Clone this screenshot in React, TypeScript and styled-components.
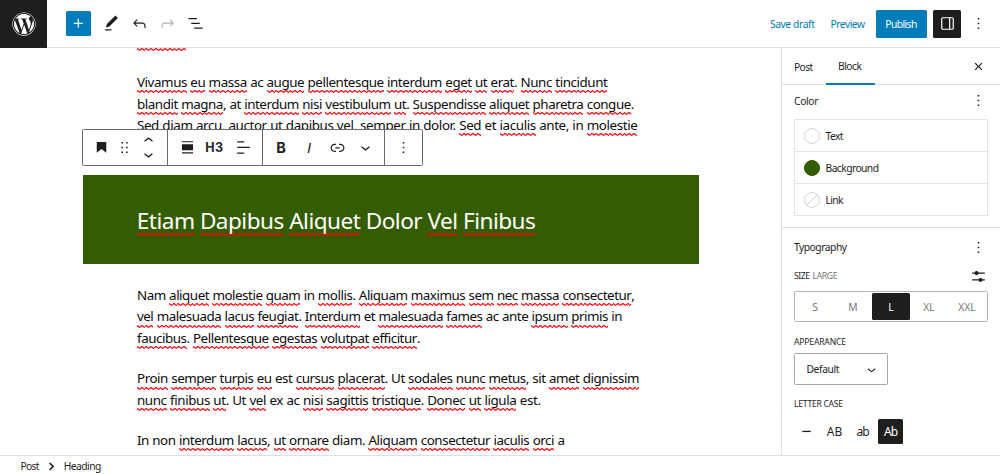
import React, { useLayoutEffect, useRef, useState } from "react";
import styled, { createGlobalStyle, css } from "styled-components";
import { FaWordpress } from "react-icons/fa";

const ink = "#1e1e1e";
const blue = "#007cba";
const line = "#e0e0e0";
const green = "#345c00";

const GlobalStyle = createGlobalStyle`
  *, *::before, *::after { box-sizing: border-box; }
  body {
    margin: 0;
    background: #fff;
    color: ${ink};
    font-family: "Noto Sans", "Open Sans", sans-serif;
    font-size: 10.3px;
    overflow: hidden;
  }
  button { font: inherit; color: inherit; background: none; border: 0; padding: 0; margin: 0; }
  h2, h3, p { margin: 0; font-weight: 400; }
`;

/* Text tracked so that it takes exactly the given width. */
const Tracked = styled.span`
  display: inline-block;
  white-space: nowrap;
`;

function Fit({ width, children }: { width: number; children: React.ReactNode }) {
  const ref = useRef<HTMLSpanElement>(null);
  const [spacing, setSpacing] = useState(0);
  useLayoutEffect(() => {
    const el = ref.current;
    if (!el) return;
    el.style.letterSpacing = "0px";
    const natural = el.getBoundingClientRect().width;
    const count = (el.textContent || "").length;
    const next = (width - natural) / Math.max(1, count - 1);
    el.style.letterSpacing = `${next}px`;
    setSpacing(next);
  }, [width]);
  return (
    <Tracked ref={ref} style={{ letterSpacing: `${spacing}px` }}>
      {children}
    </Tracked>
  );
}

const paths = {
  plus: "M11 12.5V17.5H12.5V12.5H17.5V11H12.5V6H11V11H6V12.5H11Z",
  pencil: "M20.1 5.1L16.9 2 6.2 12.7l-1.3 4.4 4.5-1.3L20.1 5.1zM4 20.8h8v-1.5H4v1.5z",
  undo: "M18.3 11.7c-.6-.6-1.4-.9-2.3-.9H6.7l2.9-3.3-1.1-1-4.5 5L8.5 16l1-1-2.7-2.7H16c.5 0 .9.2 1.3.5 1 1 1 3.4 1 4.5v.3h1.5v-.2c0-1.5 0-4.3-1.5-5.7z",
  redo: "M15.6 6.5l-1.1 1 2.9 3.3H8c-.9 0-1.7.3-2.3.9-1.4 1.5-1.4 4.2-1.4 5.6v.2h1.5v-.3c0-1.1 0-3.5 1-4.5.3-.3.7-.5 1.3-.5h9.2L14.5 15l1.1 1.1 4.6-4.6-4.6-5z",
  listView: "M13.8 5.2H3v1.5h10.8V5.2zm-3.6 12v1.5H21v-1.5H10.2zm7.2-6H6.6v1.5h10.8v-1.5z",
  more: "M13 19h-2v-2h2v2zm0-6h-2v-2h2v2zm0-6h-2V5h2v2z",
  drawer: "M18 4H6c-1.1 0-2 .9-2 2v12c0 1.1.9 2 2 2h12c1.1 0 2-.9 2-2V6c0-1.1-.9-2-2-2zm-4 14.5H6c-.3 0-.5-.2-.5-.5V6c0-.3.2-.5.5-.5h8v13zm4.5-.5c0 .3-.2.5-.5.5h-2.5v-13H18c.3 0 .5.2.5.5v12z",
  close: "M12 13.06l3.712 3.713 1.061-1.06L13.061 12l3.712-3.712-1.06-1.06L12 10.938 8.288 7.227l-1.061 1.06L10.939 12l-3.712 3.712 1.06 1.061L12 13.061z",
  bookmark: "M6 5V18.6L12 13.85L18 18.6V5H6Z",
  drag: "M8 7h2V5H8v2zm0 6h2v-2H8v2zm0 6h2v-2H8v2zm6-14v2h2V5h-2zm0 8h2v-2h-2v2zm0 6h2v-2h-2v2z",
  up: "M6.5 12.4L12 8l5.5 4.4-.9 1.2L12 10l-4.5 3.6-1-1.2z",
  down: "M17.5 11.6L12 16l-5.5-4.4.9-1.2L12 14l4.5-3.6 1 1.2z",
  fullWidth: "M5 4h14v1.5H5zM5 8h14v7.5H5zM5 18h14v1.5H5z",
  alignLeft: "M4 19.8h8.9v-1.5H4v1.5zm8.9-15.6H4v1.5h8.9V4.2zm-8.9 7v1.5h16v-1.5H4z",
  link: "M15.6 7.2H14v1.5h1.6c2 0 3.7 1.7 3.7 3.7s-1.7 3.7-3.7 3.7H14v1.5h1.6c2.8 0 5.2-2.3 5.2-5.2 0-2.9-2.3-5.2-5.2-5.2zM4.7 12.4c0-2 1.7-3.7 3.7-3.7H10V7.2H8.4c-2.9 0-5.2 2.3-5.2 5.2 0 2.9 2.3 5.2 5.2 5.2H10v-1.5H8.4c-2 0-3.7-1.7-3.7-3.7zm4.6.9h5.3v-1.5H9.3v1.5z",
  settings: "M14.5 13.8c-1.1 0-2.1.7-2.4 1.8H4V17h8.1c.3 1 1.3 1.8 2.4 1.8s2.1-.7 2.4-1.8H20v-1.5h-3.1c-.3-1-1.3-1.7-2.4-1.7zM11.9 7c-.3-1-1.3-1.8-2.4-1.8S7.4 6 7.1 7H4v1.5h3.1c.3 1 1.3 1.8 2.4 1.8s2.1-.7 2.4-1.8H20V7h-8.1z",
  dash: "M6 11h12v1.8H6z",
};

const Svg = styled.svg`
  display: block;
  flex: none;
  fill: currentColor;
`;

function Icon({ name, size = 19 }: { name: keyof typeof paths; size?: number }) {
  return (
    <Svg width={size} height={size} viewBox="0 0 24 24">
      <path d={paths[name]} />
    </Svg>
  );
}

/* ---------- Shell ---------- */

const Page = styled.div`
  display: grid;
  grid-template: 48px 408px 18px / 781px 219px;
  width: 1000px;
  height: 474px;
  overflow: hidden;
`;

const Header = styled.header`
  grid-column: 1 / 3;
  display: flex;
  align-items: center;
  border-bottom: 1px solid ${line};
  padding-right: 12px;
`;

const Logo = styled.div`
  display: flex;
  align-items: center;
  justify-content: center;
  align-self: flex-start;
  width: 47px;
  height: 48px;
  flex: none;
  background: ${ink};
  color: #fff;
`;

const Tools = styled.div`
  display: flex;
  align-items: center;
  margin-left: 19px;
  flex: 1;
`;

const Inserter = styled.button`
  display: flex;
  align-items: center;
  justify-content: center;
  width: 25px;
  height: 25px;
  margin-right: 6px;
  border-radius: 1.5px;
  background: ${blue};
  color: #fff;
`;

const ToolButton = styled.button<{ $muted?: boolean }>`
  display: flex;
  align-items: center;
  justify-content: center;
  width: 28px;
  height: 28px;
  color: ${(p) => (p.$muted ? "#b4b4b4" : ink)};
`;

const LinkButton = styled.button<{ $gap: number }>`
  color: ${blue};
  margin-right: ${(p) => p.$gap}px;
  padding-top: 1px;
`;

const Publish = styled.button`
  width: 51px;
  height: 28px;
  padding: 1px 1px 0 0;
  border-radius: 1.5px;
  background: ${blue};
  color: #fff;
`;

const PanelToggle = styled.button`
  display: flex;
  align-items: center;
  justify-content: center;
  width: 28px;
  height: 28px;
  margin: 0 8px 0 6px;
  border-radius: 1.5px;
  background: ${ink};
  color: #fff;
`;

const Footer = styled.footer`
  grid-column: 1 / 3;
  display: flex;
  align-items: center;
  padding: 2px 0 0 20.5px;
  gap: 6px;
`;

/* ---------- Editor ---------- */

const Canvas = styled.main`
  position: relative;
  overflow: hidden;
  border-bottom: 1px solid ${line};
  color: #0c0c0c;
`;

const wave = `url("data:image/svg+xml,%3Csvg xmlns='http://www.w3.org/2000/svg' width='4.7' height='3' viewBox='0 0 4.7 3'%3E%3Cpath d='M-1 .6H0C.9 .6 1.4 2.4 2.35 2.4S3.8 .6 4.7 .6H6' fill='none' stroke='%23ff0008' stroke-width='1.2'/%3E%3C/svg%3E")`;

const squiggle = css`
  height: 3px;
  background: ${wave} 0 0 / 4.7px 3px repeat-x;
`;

const Misspelled = styled.span<{ $drop: number }>`
  position: relative;
  display: inline-block;
  &::after {
    content: "";
    position: absolute;
    left: 0;
    right: 0;
    bottom: ${(p) => p.$drop}px;
    ${squiggle}
  }
`;

const Cutoff = styled.div`
  width: 49px;
  margin: 0 0 21px 137px;
  ${squiggle}
`;

const Paragraph = styled.p<{ $after: number }>`
  padding-left: 137px;
  margin-bottom: ${(p) => p.$after}px;
  font-size: 13.4px;
  line-height: 21.6px;
  word-spacing: 0.3px;
`;

const Row = styled.span`
  display: block;
  height: 21.6px;
`;

const Banner = styled.h2`
  display: flex;
  align-items: center;
  width: 616.3px;
  height: 88.8px;
  margin: 0 0 20.5px 82.6px;
  padding: 3px 0 0 54.2px;
  background: ${green};
  color: #fff;
  font-size: 22.6px;
  line-height: 30px;
`;

/* A trailing "~" on a word marks it as flagged by the spelling checker. */
function Copy({ text, drop }: { text: string; drop: number }) {
  return (
    <>
      {text.split(" ").map((word, i) => {
        const [body, rest] = word.split("~");
        return (
          <React.Fragment key={i}>
            {i > 0 && " "}
            {rest === undefined ? body : (
              <>
                <Misspelled $drop={drop}>{body}</Misspelled>
                {rest}
              </>
            )}
          </React.Fragment>
        );
      })}
    </>
  );
}

type Line = [number, string];

const intro: Line[] = [
  [471, "Vivamus~ eu~ massa~ ac augue~ pellentesque~ interdum~ eget~ ut~ erat~. Nunc~ tincidunt~"],
  [497.5, "blandit~ magna~, at interdum~ nisi~ vestibulum~ ut~. Suspendisse~ aliquet~ pharetra~ congue~."],
  [501, "Sed~ diam arcu~, auctor~ ut~ dapibus~ vel~, semper~ in dolor. Sed~ et iaculis~ ante, in molestie~"],
];
const second: Line[] = [
  [498, "Nam aliquet~ molestie~ quam~ in mollis~. Aliquam~ maximus~ sem~ nec~ massa~ consectetur~,"],
  [485.5, "vel~ malesuada~ lacus~ feugiat~. Interdum~ et malesuada~ fames~ ac ante ipsum~ primis~ in"],
  [283.5, "faucibus~. Pellentesque~ egestas~ volutpat~ efficitur~."],
];
const third: Line[] = [
  [502.5, "Proin~ semper~ turpis~ eu~ est cursus~ placerat~. Ut sodales~ nunc~ metus~, sit amet~ dignissim~"],
  [404, "nunc~ finibus~ ut~. Ut vel~ ex ac nisi~ sagittis~ tristique~. Donec~ ut~ ligula~ est."],
];
const fourth: Line[] = [
  [428, "In non interdum~ lacus~, ut~ ornare~ diam. Aliquam~ consectetur~ iaculis~ orci~ a"],
];

function Text({ lines, after }: { lines: Line[]; after: number }) {
  return (
    <Paragraph $after={after}>
      {lines.map(([width, text]) => (
        <Row key={text}>
          <Fit width={width}><Copy text={text} drop={0.3} /></Fit>
        </Row>
      ))}
    </Paragraph>
  );
}

const BlockToolbar = styled.div`
  position: absolute;
  left: 82px;
  top: 81px;
  display: flex;
  width: 341px;
  height: 37px;
  border: 1px solid #6a6a6a;
  border-radius: 1.5px;
  background: #fff;
  color: ${ink};
`;

const Group = styled.div<{ $width: number }>`
  display: flex;
  align-items: center;
  justify-content: center;
  width: ${(p) => p.$width}px;
  & + & { border-left: 1px solid #6a6a6a; }
`;

const Cell = styled.div<{ $width?: number }>`
  display: flex;
  align-items: center;
  justify-content: center;
  width: ${(p) => p.$width ?? 28}px;
`;

const Movers = styled.div`
  display: flex;
  flex-direction: column;
  align-items: center;
  width: 23.5px;
  svg { margin: -2.6px 0; }
`;

const Glyph = styled.span<{ $italic?: boolean; $size: number }>`
  font-family: ${(p) => (p.$italic ? '"Liberation Sans", sans-serif' : '"Inter", sans-serif')};
  font-size: ${(p) => p.$size}px;
  font-weight: ${(p) => (p.$italic ? 400 : 700)};
  font-style: ${(p) => (p.$italic ? "italic" : "normal")};
  line-height: 1;
  padding-top: ${(p) => (p.$italic ? 0 : 1)}px;
  padding-right: 1px;
`;

/* ---------- Sidebar ---------- */

const Sidebar = styled.aside`
  display: flex;
  flex-direction: column;
  border-left: 1px solid ${line};
  border-bottom: 1px solid ${line};
`;

const Tabs = styled.div`
  display: flex;
  height: 37px;
  padding-right: 12px;
  border-bottom: 1px solid ${line};
  align-items: stretch;
`;

const Tab = styled.button<{ $width: number; $active?: boolean }>`
  width: ${(p) => p.$width}px;
  margin-bottom: -1px;
  padding: ${(p) => (p.$active ? 1 : 0)}px 1.5px 0 0;
  border-bottom: ${(p) => (p.$active ? `2px solid ${blue}` : "0")};
`;

const CloseTab = styled.button`
  margin-left: auto;
`;

const Section = styled.section<{ $height?: number }>`
  padding: 0 12px;
  height: ${(p) => (p.$height ? `${p.$height}px` : "auto")};
  & + & { border-top: 1px solid ${line}; }
`;

const SectionHead = styled.div<{ $height: number }>`
  display: flex;
  align-items: center;
  justify-content: space-between;
  height: ${(p) => p.$height}px;
`;

const SwatchList = styled.div`
  width: 194px;
  border: 1px solid #e4e4e4;
  border-bottom: 0;
  margin-top: 3px;
`;

const SwatchRow = styled.div`
  display: flex;
  align-items: center;
  gap: 6px;
  height: 32px;
  padding-left: 8.5px;
  border-bottom: 1px solid #e4e4e4;
`;

const Swatch = styled.span<{ $fill?: string; $none?: boolean }>`
  width: 16px;
  height: 16px;
  border-radius: 50%;
  border: 1px solid ${(p) => (p.$fill ? "#2f5400" : "#d6d6d6")};
  background: ${(p) =>
    p.$none
      ? "linear-gradient(135deg, #fff 47%, #d0d0d0 47%, #d0d0d0 53%, #fff 53%)"
      : p.$fill ?? "#fff"};
`;

const Label = styled.h3`
  display: flex;
  align-items: center;
  gap: 3px;
  font-size: 8.6px;
  height: 16px;
  span + span { color: #757575; }
`;

const LabelRow = styled.div`
  display: flex;
  align-items: center;
  justify-content: space-between;
  height: 20px;
`;

const Segments = styled.div`
  display: flex;
  width: 194px;
  height: 31px;
  margin: 5px 0 12px;
  padding: 1px;
  border: 1px solid #b4b4b4;
  border-radius: 1.5px;
`;

const Segment = styled.button<{ $active?: boolean }>`
  flex: 1;
  border-radius: 1.5px;
  color: ${(p) => (p.$active ? "#fff" : "#757575")};
  background: ${(p) => (p.$active ? ink : "transparent")};
`;

const Select = styled.div`
  display: flex;
  align-items: center;
  justify-content: space-between;
  width: 94px;
  height: 32px;
  margin: 3px 0 11px;
  padding: 0 7px 0 11.5px;
  border: 1px solid #a8a8a8;
  border-radius: 1.5px;
`;

const Cases = styled.div`
  display: flex;
  gap: 3px;
  margin-top: 7px;
`;

const CaseButton = styled.button<{ $active?: boolean }>`
  display: flex;
  align-items: center;
  justify-content: center;
  width: 25px;
  height: 25px;
  border-radius: 1.5px;
  font-size: 12px;
  color: ${(p) => (p.$active ? "#fff" : ink)};
  background: ${(p) => (p.$active ? ink : "transparent")};
`;

const Chevron = styled.svg`
  fill: none;
  stroke: ${ink};
  stroke-width: 3;
`;

export default function App() {
  return (
    <>
      <GlobalStyle />
      <Page>
        <Header>
          <Logo><FaWordpress size={24} /></Logo>
          <Tools>
            <Inserter><Icon name="plus" /></Inserter>
            <ToolButton><Icon name="pencil" /></ToolButton>
            <ToolButton><Icon name="undo" /></ToolButton>
            <ToolButton $muted><Icon name="redo" /></ToolButton>
            <ToolButton><Icon name="listView" /></ToolButton>
          </Tools>
          <LinkButton $gap={16}><Fit width={45}>Save draft</Fit></LinkButton>
          <LinkButton $gap={11.5}><Fit width={34.5}>Preview</Fit></LinkButton>
          <Publish><Fit width={32}>Publish</Fit></Publish>
          <PanelToggle><Icon name="drawer" /></PanelToggle>
          <Icon name="more" />
        </Header>

        <Canvas>
          <Cutoff />
          <Text lines={intro} after={38.7} />
          <Banner>
            <Fit width={399}>
              <Copy text="Etiam~ Dapibus~ Aliquet~ Dolor Vel~ Finibus~" drop={0} />
            </Fit>
          </Banner>
          <Text lines={second} after={18.7} />
          <Text lines={third} after={18.7} />
          <Text lines={fourth} after={0} />
          <BlockToolbar>
            <Group $width={84}>
              <Cell $width={23}><Icon name="bookmark" /></Cell>
              <Cell $width={23.5}><Icon name="drag" /></Cell>
              <Movers><Icon name="up" /><Icon name="down" /></Movers>
            </Group>
            <Group $width={95}>
              <Cell><Icon name="fullWidth" /></Cell>
              <Cell><Glyph $size={12.5}><Fit width={18}>H3</Fit></Glyph></Cell>
              <Cell><Icon name="alignLeft" /></Cell>
            </Group>
            <Group $width={122}>
              <Cell><Glyph $size={14.5}>B</Glyph></Cell>
              <Cell><Glyph $size={15} $italic>I</Glyph></Cell>
              <Cell><Icon name="link" /></Cell>
              <Cell><Icon name="down" /></Cell>
            </Group>
            <Group $width={38}><Icon name="more" /></Group>
          </BlockToolbar>
        </Canvas>

        <Sidebar>
          <Tabs>
            <Tab $width={44}><Fit width={19}>Post</Fit></Tab>
            <Tab $width={49} $active><Fit width={24}>Block</Fit></Tab>
            <CloseTab><Icon name="close" /></CloseTab>
          </Tabs>
          <Section $height={142}>
            <SectionHead $height={31}>
              <Fit width={24.5}>Color</Fit>
              <Icon name="more" />
            </SectionHead>
            <SwatchList>
              <SwatchRow><Swatch /><Fit width={18}>Text</Fit></SwatchRow>
              <SwatchRow><Swatch $fill={green} /><Fit width={53.5}>Background</Fit></SwatchRow>
              <SwatchRow><Swatch $none /><Fit width={18}>Link</Fit></SwatchRow>
            </SwatchList>
          </Section>
          <Section>
            <SectionHead $height={38}>
              <Fit width={53}>Typography</Fit>
              <Icon name="more" />
            </SectionHead>
            <LabelRow>
              <Label><Fit width={16}>SIZE</Fit><Fit width={25}>LARGE</Fit></Label>
              <Icon name="settings" />
            </LabelRow>
            <Segments>
              <Segment>S</Segment>
              <Segment>M</Segment>
              <Segment $active>L</Segment>
              <Segment>XL</Segment>
              <Segment>XXL</Segment>
            </Segments>
            <Label><Fit width={52}>APPEARANCE</Fit></Label>
            <Select><Fit width={33}>Default</Fit><Icon name="down" size={17} /></Select>
            <Label><Fit width={49}>LETTER CASE</Fit></Label>
            <Cases>
              <CaseButton><Icon name="dash" size={17} /></CaseButton>
              <CaseButton><Fit width={15.5}>AB</Fit></CaseButton>
              <CaseButton><Fit width={13}>ab</Fit></CaseButton>
              <CaseButton $active><Fit width={14}>Ab</Fit></CaseButton>
            </Cases>
          </Section>
        </Sidebar>

        <Footer>
          <Fit width={19}>Post</Fit>
          <Chevron width="13" height="13" viewBox="0 0 24 24">
            <path d="M8.5 5.5L15 12l-6.5 6.5" />
          </Chevron>
          <Fit width={37.5}>Heading</Fit>
        </Footer>
      </Page>
    </>
  );
}
